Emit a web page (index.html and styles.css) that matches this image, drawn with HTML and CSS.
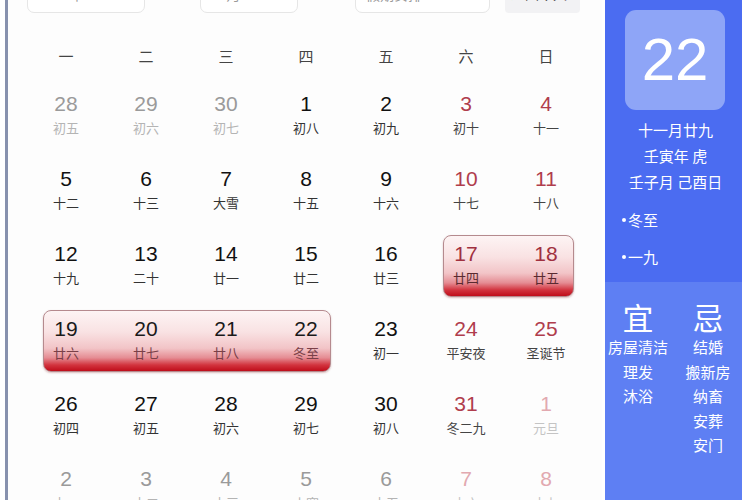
FILE: index.html
```html
<!DOCTYPE html>
<html lang="zh">
<head>
<meta charset="utf-8">
<link rel="stylesheet" href="styles.css">
</head>
<body>
<div class="app">
  <div class="main">
    <div class="topbar">
      <div class="sel sel-year">2022年</div>
      <div class="arrow arrow-prev">‹</div>
      <div class="sel sel-month">12月</div>
      <div class="arrow arrow-next">›</div>
      <div class="sel sel-hol">假期安排</div>
      <div class="today">返回今天</div>
    </div>
    <div class="weekdays">
      <span>一</span><span>二</span><span>三</span><span>四</span><span>五</span><span>六</span><span>日</span>
    </div>
    <div class="grid">
      <div class="hl hl-a"></div>
      <div class="hl hl-b"></div>

      <div class="cell other"><b>28</b><i>初五</i></div>
      <div class="cell other"><b>29</b><i>初六</i></div>
      <div class="cell other"><b>30</b><i>初七</i></div>
      <div class="cell"><b>1</b><i>初八</i></div>
      <div class="cell"><b>2</b><i>初九</i></div>
      <div class="cell we"><b>3</b><i>初十</i></div>
      <div class="cell we"><b>4</b><i>十一</i></div>

      <div class="cell"><b>5</b><i>十二</i></div>
      <div class="cell"><b>6</b><i>十三</i></div>
      <div class="cell"><b>7</b><i>大雪</i></div>
      <div class="cell"><b>8</b><i>十五</i></div>
      <div class="cell"><b>9</b><i>十六</i></div>
      <div class="cell we"><b>10</b><i>十七</i></div>
      <div class="cell we"><b>11</b><i>十八</i></div>

      <div class="cell"><b>12</b><i>十九</i></div>
      <div class="cell"><b>13</b><i>二十</i></div>
      <div class="cell"><b>14</b><i>廿一</i></div>
      <div class="cell"><b>15</b><i>廿二</i></div>
      <div class="cell"><b>16</b><i>廿三</i></div>
      <div class="cell we on r3 c6"><b>17</b><i>廿四</i></div>
      <div class="cell we on r3 c7"><b>18</b><i>廿五</i></div>

      <div class="cell on r4 c1"><b>19</b><i>廿六</i></div>
      <div class="cell on r4 c2"><b>20</b><i>廿七</i></div>
      <div class="cell on r4 c3"><b>21</b><i>廿八</i></div>
      <div class="cell on r4 c4"><b>22</b><i>冬至</i></div>
      <div class="cell"><b>23</b><i>初一</i></div>
      <div class="cell we"><b>24</b><i>平安夜</i></div>
      <div class="cell we"><b>25</b><i>圣诞节</i></div>

      <div class="cell"><b>26</b><i>初四</i></div>
      <div class="cell"><b>27</b><i>初五</i></div>
      <div class="cell"><b>28</b><i>初六</i></div>
      <div class="cell"><b>29</b><i>初七</i></div>
      <div class="cell"><b>30</b><i>初八</i></div>
      <div class="cell we"><b>31</b><i>冬二九</i></div>
      <div class="cell other we"><b>1</b><i>元旦</i></div>

      <div class="cell other"><b>2</b><i>十一</i></div>
      <div class="cell other"><b>3</b><i>十二</i></div>
      <div class="cell other"><b>4</b><i>十三</i></div>
      <div class="cell other"><b>5</b><i>小寒</i></div>
      <div class="cell other"><b>6</b><i>十五</i></div>
      <div class="cell other we"><b>7</b><i>十六</i></div>
      <div class="cell other we"><b>8</b><i>十七</i></div>
    </div>
  </div>
  <div class="side">
    <div class="side-top">
      <div class="bigdate">22</div>
      <div class="info">
        <div>十一月廿九</div>
        <div>壬寅年 虎</div>
        <div>壬子月 己酉日</div>
      </div>
      <ul class="fest">
        <li>冬至</li>
        <li>一九</li>
      </ul>
    </div>
    <div class="side-bottom">
      <div class="col">
        <div class="head">宜</div>
        <div>房屋清洁</div>
        <div>理发</div>
        <div>沐浴</div>
      </div>
      <div class="col">
        <div class="head">忌</div>
        <div>结婚</div>
        <div>搬新房</div>
        <div>纳畜</div>
        <div>安葬</div>
        <div>安门</div>
      </div>
    </div>
  </div>
</div>
</body>
</html>
```

FILE: styles.css
```css
* { box-sizing: border-box; }
html, body { margin: 0; padding: 0; background: #fff; }
body {
  font-family: "Liberation Sans", "Noto Sans CJK SC", sans-serif;
  width: 750px;
  height: 500px;
  overflow: hidden;
}
.app {
  display: flex;
  height: 500px;
}
.main {
  margin-left: 5px;
  border-left: 3px solid #8791ae;
  width: 597px;
  height: 500px;
  overflow: hidden;
  background: #fdfdfd;
}
.topbar {
  display: flex;
  align-items: center;
  margin-top: -27px;
  height: 40px;
  padding-left: 19px;
  font-size: 14px;
  color: #666;
}
.sel {
  height: 40px;
  border: 1px solid #e6e6e6;
  border-radius: 7px;
  background: #fff;
  padding: 10px 10px;
  color: #999;
}
.sel-year { width: 118px; }
.sel-month { width: 98px; }
.sel-hol { width: 135px; }
.arrow {
  text-align: center;
  font-size: 18px;
  color: #999;
}
.arrow-prev { width: 55px; }
.arrow-next { width: 57px; }
.today {
  margin-left: 15px;
  width: 75px;
  height: 40px;
  background: #f2f2f4;
  border-radius: 4px;
  padding: 10px 6px;
  color: #333;
}
.weekdays {
  display: grid;
  grid-template-columns: repeat(7, 80px);
  margin-top: 27px;
  padding-left: 18px;
  height: 30px;
  align-items: center;
  font-family: "Noto Sans CJK SC", sans-serif;
  font-size: 15px;
  color: #444;
}
.weekdays span { text-align: center; }
.grid {
  display: grid;
  grid-template-columns: repeat(7, 80px);
  grid-auto-rows: 75px;
  margin-top: 8px;
  padding-left: 18px;
}
.hl {
  align-self: center;
  height: 62px;
  border: 1px solid #b58a8e;
  border-radius: 8px;
  margin: 0 12px 0 17px;
  background: linear-gradient(to bottom, #fdf4f4 0%, #f9e2e3 35%, #f2c4c7 62%, #e58c93 78%, #d2333e 90%, #bf0d1a 100%);
  box-shadow: 0 1px 2px rgba(120, 0, 0, 0.25);
}
.hl-a { grid-row: 3; grid-column: 6 / span 2; }
.hl-b { grid-row: 4; grid-column: 1 / span 4; margin-right: 15px; }
.r3 { grid-row: 3; }
.r4 { grid-row: 4; }
.c1 { grid-column: 1; }
.c2 { grid-column: 2; }
.c3 { grid-column: 3; }
.c4 { grid-column: 4; }
.c6 { grid-column: 6; }
.c7 { grid-column: 7; }
.cell {
  display: flex;
  flex-direction: column;
  align-items: center;
  justify-content: center;
  gap: 3px;
  position: relative;
  z-index: 1;
  padding-bottom: 2px;
}
.cell b {
  font-weight: normal;
  font-family: "Liberation Sans", Arial, sans-serif;
  font-size: 21px;
  line-height: 24px;
  color: #111;
}
.cell i {
  font-style: normal;
  font-family: "Noto Sans CJK SC", sans-serif;
  font-size: 13px;
  line-height: 18px;
  color: #333;
}
.cell.we b { color: #b03d4d; }
.cell.we i { color: #444; }
.cell.other b { color: #9a9a9a; }
.cell.other i { color: #b4b4b4; }
.cell.other.we b { color: #e2a9b0; }
.cell.other.we i { color: #c4c4c4; }
.cell.on b { color: #1a1a1a; }
.cell.we.on b { color: #a0303f; }
.cell.on i { color: #7a4048; }
.cell.we.on i { color: #5a2a30; }

.side {
  width: 137px;
  height: 500px;
  margin-left: 3px;
  color: #fff;
  font-family: "Noto Sans CJK SC", sans-serif;
  display: flex;
  flex-direction: column;
}
.side-top {
  height: 282px;
  background: #4b6cf1;
  padding-top: 10px;
}
.bigdate {
  width: 100px;
  height: 100px;
  margin-left: 20px;
  background: #8ea5f7;
  border-radius: 11px;
  font-family: "Liberation Sans", Arial, sans-serif;
  font-size: 60px;
  line-height: 100px;
  text-align: center;
  color: #fff;
}
.info {
  margin-top: 7px;
  text-align: center;
  font-size: 15px;
  line-height: 26px;
  padding-left: 4px;
}
.fest {
  list-style: none;
  margin: 6px 0 0 0;
  padding: 0 0 0 17px;
  font-size: 15px;
  line-height: 37px;
}
.fest li { position: relative; padding-left: 6px; }
.fest li::before {
  content: "";
  position: absolute;
  left: 0;
  top: 17px;
  width: 4px;
  height: 4px;
  border-radius: 50%;
  background: #fff;
}
.side-bottom {
  flex: 1;
  background: #5e7ff3;
  display: flex;
  padding-top: 17px;
}
.col {
  width: 68px;
  text-align: center;
  font-size: 15px;
  line-height: 24.5px;
}
.col:first-child { width: 66px; }
.col:last-child { margin-left: 3px; }
.head {
  font-size: 31px;
  line-height: 36px;
}
```
